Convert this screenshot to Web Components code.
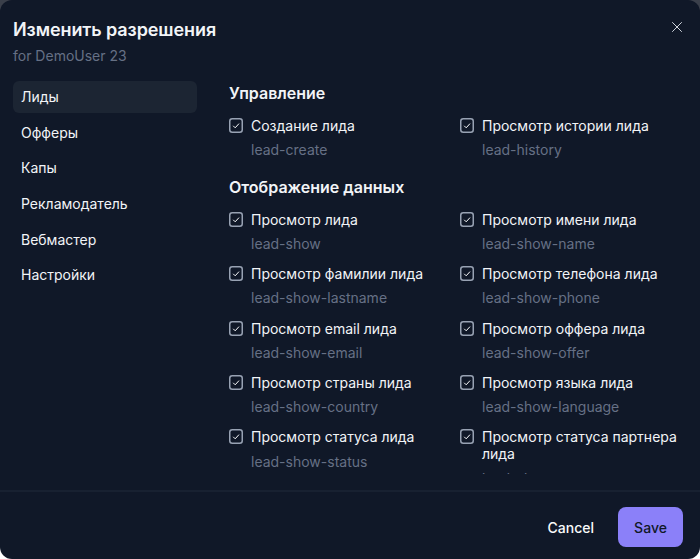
<!DOCTYPE html>
<html lang="ru">
<head>
<meta charset="utf-8">
<title>Изменить разрешения</title>
<style>
  html, body { margin: 0; padding: 0; height: 100%; background: linear-gradient(#3a3f4a 0 14px, #fff 14px); }
  body { font-family: Inter, "Noto Sans", sans-serif; overflow: hidden; }
</style>
</head>
<body>
<perm-dialog heading="Изменить разрешения" sub="for DemoUser 23">
  <nav-item slot="nav" active>Лиды</nav-item>
  <nav-item slot="nav">Офферы</nav-item>
  <nav-item slot="nav">Капы</nav-item>
  <nav-item slot="nav">Рекламодатель</nav-item>
  <nav-item slot="nav">Вебмастер</nav-item>
  <nav-item slot="nav">Настройки</nav-item>

  <perm-section heading="Управление">
    <perm-check code="lead-create">Создание лида</perm-check>
    <perm-check code="lead-history">Просмотр истории лида</perm-check>
  </perm-section>
  <perm-section heading="Отображение данных">
    <perm-check code="lead-show">Просмотр лида</perm-check>
    <perm-check code="lead-show-name">Просмотр имени лида</perm-check>
    <perm-check code="lead-show-lastname">Просмотр фамилии лида</perm-check>
    <perm-check code="lead-show-phone">Просмотр телефона лида</perm-check>
    <perm-check code="lead-show-email">Просмотр email лида</perm-check>
    <perm-check code="lead-show-offer">Просмотр оффера лида</perm-check>
    <perm-check code="lead-show-country">Просмотр страны лида</perm-check>
    <perm-check code="lead-show-language">Просмотр языка лида</perm-check>
    <perm-check code="lead-show-status">Просмотр статуса лида</perm-check>
    <perm-check code="lead-show-partner-status">Просмотр статуса партнера лида</perm-check>
  </perm-section>
</perm-dialog>

<script>
class PermDialog extends HTMLElement {
  connectedCallback() {
    this.attachShadow({ mode: 'open' });
    this.shadowRoot.innerHTML = `
      <style>
        :host {
          display: flex;
          flex-direction: column;
          height: 559px;
          width: 700px;
          box-sizing: border-box;
          background: #101828;
          border-radius: 12px;
          overflow: hidden;
          color: #f9fafb;
        }
        header { position: relative; padding: 19px 13px 0; }
        h1 { margin: 0; font-size: 18px; line-height: 22px; font-weight: 600; letter-spacing: -.1px; color: #f2f4f7; }
        p { margin: 6px 0 0; font-size: 14px; line-height: 17px; color: #667085; }
        .close {
          position: absolute;
          top: 20px;
          right: 16px;
          width: 14px;
          height: 14px;
          padding: 0;
          border: 0;
          background: none;
          color: #d0d5dd;
        }
        .close svg { display: block; }
        .body { flex: 1; min-height: 0; display: flex; padding: 17px 0 0 13px; }
        .nav { width: 184px; flex: none; display: flex; flex-direction: column; gap: 3.7px; }
        .content { flex: 1; min-width: 0; margin-left: 32px; padding-right: 17px; overflow: hidden; height: 393px; margin-bottom: 1px; }
        footer {
          flex: none;
          border-top: 2px solid #182131;
          display: flex;
          justify-content: flex-end;
          align-items: center;
          gap: 24px;
          padding: 15px 17px 12px;
        }
        button.txt, button.save {
          font: 500 14px/17px Inter, sans-serif;
          border: 0;
          padding: 0;
        }
        button.txt { background: none; color: #f9fafb; }
        button.save {
          width: 65px;
          height: 40px;
          border-radius: 8px;
          background: #8b80f9;
          color: #101828;
        }
      </style>
      <header>
        <h1>${this.getAttribute('heading')}</h1>
        <p>${this.getAttribute('sub')}</p>
        <button class="close" aria-label="Close">
          <svg width="14" height="14" viewBox="0 0 14 14" fill="none" stroke="currentColor" stroke-width="1" stroke-linecap="round"><path d="M2.5 2.5l9 9M11.5 2.5l-9 9"/></svg>
        </button>
      </header>
      <div class="body">
        <div class="nav"><slot name="nav"></slot></div>
        <div class="content"><slot></slot></div>
      </div>
      <footer>
        <button class="txt">Cancel</button>
        <button class="save">Save</button>
      </footer>
    `;
  }
}

class NavItem extends HTMLElement {
  connectedCallback() {
    this.attachShadow({ mode: 'open' });
    this.shadowRoot.innerHTML = `
      <style>
        :host {
          display: block;
          height: 32px;
          padding: 0 8px;
          border-radius: 6px;
          font-size: 14px;
          line-height: 32px;
          color: #f2f4f7;
        }
        :host([active]) { background: #1c2533; }
      </style>
      <slot></slot>
    `;
  }
}

class PermSection extends HTMLElement {
  connectedCallback() {
    this.attachShadow({ mode: 'open' });
    this.shadowRoot.innerHTML = `
      <style>
        :host { display: block; margin-bottom: 17px; }
        h2 { margin: 0 0 11.9px; font-size: 16px; line-height: 24px; font-weight: 600; color: #f2f4f7; }
        .grid { display: grid; grid-template-columns: 223px 223px; column-gap: 8px; row-gap: 13.3px; }
      </style>
      <h2>${this.getAttribute('heading')}</h2>
      <div class="grid"><slot></slot></div>
    `;
  }
}

class PermCheck extends HTMLElement {
  connectedCallback() {
    this.attachShadow({ mode: 'open' });
    this.shadowRoot.innerHTML = `
      <style>
        :host { display: flex; gap: 8px; align-items: flex-start; }
        svg { flex: none; display: block; margin-top: 1px; }
        .label { font-size: 14px; line-height: 17px; color: #f2f4f7; }
        .code { margin-top: 7.1px; font-size: 14px; line-height: 17px; color: #667085; }
      </style>
      <svg width="14" height="15" viewBox="0 0 14 15" fill="none">
        <rect x=".75" y=".75" width="12.5" height="13.5" rx="2.5" stroke="#98a2b3" stroke-width="1.5"/>
        <path d="M4.2 7.8l2 2 3.8-4.2" stroke="#f9fafb" stroke-width="1"/>
      </svg>
      <div>
        <div class="label"><slot></slot></div>
        <div class="code">${this.getAttribute('code')}</div>
      </div>
    `;
  }
}

customElements.define('perm-dialog', PermDialog);
customElements.define('nav-item', NavItem);
customElements.define('perm-section', PermSection);
customElements.define('perm-check', PermCheck);
</script>
</body>
</html>
